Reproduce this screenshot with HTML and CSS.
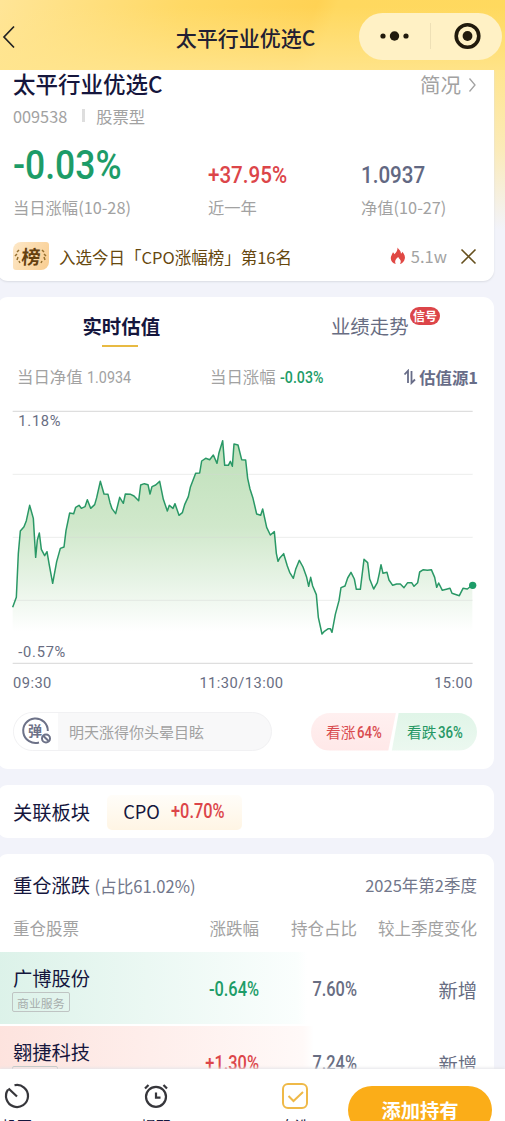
FILE: index.html
```html
<!DOCTYPE html>
<html lang="zh-CN">
<head>
<meta charset="utf-8">
<meta name="viewport" content="width=device-width, initial-scale=1">
<title>太平行业优选C</title>
<link rel="stylesheet" href="styles.css">
</head>
<body>
<div class="app">
  <header class="navbar">
    <svg class="back" width="14" height="24" viewBox="0 0 14 24"><path d="M12 1.5 2 12l10 10.5"/></svg>
    <h1 class="nav-title">太平行业优选C</h1>
    <div class="capsule">
      <svg width="143" height="47" viewBox="0 0 143 47"><circle cx="24" cy="23" r="2.600"/><circle cx="35.500" cy="23" r="4.700"/><circle cx="47" cy="23" r="2.600"/><path class="capsule-line" d="M71.500 10v26"/><circle class="ring" cx="108.500" cy="23" r="11.300"/><circle cx="108.500" cy="23" r="4.900"/></svg>
    </div>
  </header>

  <main class="content">
    <section class="card summary">
      <div class="fund-head">
        <h2 class="fund-name">太平行业优选C</h2>
        <a class="profile">简况<svg width="9" height="16" viewBox="0 0 9 16"><path d="m1.500 1.500 5.500 6.500-5.500 6.500"/></svg></a>
      </div>
      <div class="fund-meta"><span>009538</span><i class="divider"></i><span>股票型</span></div>
      <div class="metrics">
        <div class="metric"><div class="value big green"><span class="din">-0.03%</span></div><div class="label">当日涨幅(10-28)</div></div>
        <div class="metric"><div class="value red"><span class="din">+37.95%</span></div><div class="label">近一年</div></div>
        <div class="metric"><div class="value slate"><span class="din">1.0937</span></div><div class="label">净值(10-27)</div></div>
      </div>
      <div class="rank">
        <span class="rank-badge"><svg class="laurel" width="36" height="28" viewBox="0 0 36 28"><path d="M6 8l-2 2M4 12l-2 2M5 15l-1 3M6 19l1 2M29 8l2 2M31 12l2 2M31 15l1 3M29 19l-1 2"/></svg><b>榜</b></span>
        <span class="rank-text">入选今日「CPO涨幅榜」第16名</span>
        <svg class="flame" width="16" height="18" viewBox="0 0 16 18"><path d="M7.500.5C8.800 2.500 11 4 11 6.700c.8-.5 1.200-1.200 1.400-2 1.800 2.200 2.800 4.300 2.500 6.500-.4 3.500-3 5.500-5 5.700 1.200-1.500 1.100-3.500-.1-4.700-.7-.7-1.300-1.300-1.500-2.300-2.700 1.800-4 4.600-2.600 7C2.800 16.300.8 14 .8 11.200c0-2.300 1.500-3.900 2.200-5.900.8.500 1.100 1.200 1.200 2C6.400 5.500 7.700 3.500 7.500.5z"/></svg>
        <span class="heat">5.1w</span>
        <svg class="close" width="17" height="17" viewBox="0 0 17 17"><path d="m1.500 1.500 14 14m0-14-14 14"/></svg>
      </div>
    </section>

    <section class="card estimate">
      <div class="tabs">
        <div class="tab active">实时估值</div>
        <div class="tab">业绩走势<span class="signal">信号</span></div>
      </div>
      <div class="quote">
        <span>当日净值 <span class="din">1.0934</span></span>
        <span>当日涨幅 <span class="din green strong">-0.03%</span></span>
        <span class="source"><svg width="14" height="16" viewBox="0 0 14 16"><path d="M1.500 5.500 5 1.800V14M8.500 2V14l3.500-3.500"/></svg>估值源1</span>
      </div>
      <div class="chart">
        <svg width="494" height="270" viewBox="0 0 1482 810">
          <defs><linearGradient id="area" gradientUnits="userSpaceOnUse" x1="0" y1="120" x2="0" y2="695"><stop offset="0" stop-color="#bfe0ba"/><stop offset=".45" stop-color="#d0e8cb"/><stop offset=".75" stop-color="#e8f4e7"/><stop offset="1" stop-color="#fff"/></linearGradient></defs>
          <path fill="url(#area)" d="M38 622 49 592 55 460 61 393 72 380 79 362 89 316 100 355 107 472 112 420 118 399 124 448 134 467 141 455 147 490 158 550 170 485 181 445 192 441 198 392 209 339 221 341 227 322 237 316 244 325 255 320 262 299 272 325 284 314 290 293 301 244 312 282 324 283 330 308 336 326 347 341 359 292 370 310 376 282 392 283 402 288 416 302 422 255 433 251 444 254 450 282 456 260 467 255 479 244 490 298 502 333 508 316 519 325 525 311 537 346 547 338 554 314 565 290 571 262 587 220 599 219 605 183 617 175 629 179 640 165 651 190 657 158 668 122 674 196 685 196 691 184 697 199 702 132 714 135 725 179 737 180 743 235 750 267 759 295 770 342 782 346 788 327 800 382 811 405 823 395 829 460 834 484 840 473 851 461 862 498 869 517 880 535 887 508 898 481 909 501 920 532 926 559 932 532 938 558 949 584 955 652 966 702 972 695 985 686 991 686 996 697 1006 643 1017 602 1023 563 1035 558 1043 534 1053 517 1063 537 1069 568 1081 568 1092 478 1103 488 1109 537 1121 567 1132 548 1138 520 1143 494 1149 520 1161 517 1167 540 1178 556 1190 552 1201 552 1212 563 1223 548 1235 548 1242 559 1253 548 1259 516 1270 509 1282 511 1294 509 1304 532 1310 562 1316 549 1327 571 1339 568 1350 565 1356 580 1378 587 1389 565 1402 567 1417 555V695H38Z"/>
          <g class="grid"><path class="outer" d="M38 34H1418M38 790H1418"/><path d="M38 223H1418M38 412H1418M38 601H1418"/></g>
          <polyline class="line" points="38,622 49,592 55,460 61,393 72,380 79,362 89,316 100,355 107,472 112,420 118,399 124,448 134,467 141,455 147,490 158,550 170,485 181,445 192,441 198,392 209,339 221,341 227,322 237,316 244,325 255,320 262,299 272,325 284,314 290,293 301,244 312,282 324,283 330,308 336,326 347,341 359,292 370,310 376,282 392,283 402,288 416,302 422,255 433,251 444,254 450,282 456,260 467,255 479,244 490,298 502,333 508,316 519,325 525,311 537,346 547,338 554,314 565,290 571,262 587,220 599,219 605,183 617,175 629,179 640,165 651,190 657,158 668,122 674,196 685,196 691,184 697,199 702,132 714,135 725,179 737,180 743,235 750,267 759,295 770,342 782,346 788,327 800,382 811,405 823,395 829,460 834,484 840,473 851,461 862,498 869,517 880,535 887,508 898,481 909,501 920,532 926,559 932,532 938,558 949,584 955,652 966,702 972,695 985,686 991,686 996,697 1006,643 1017,602 1023,563 1035,558 1043,534 1053,517 1063,537 1069,568 1081,568 1092,478 1103,488 1109,537 1121,567 1132,548 1138,520 1143,494 1149,520 1161,517 1167,540 1178,556 1190,552 1201,552 1212,563 1223,548 1235,548 1242,559 1253,548 1259,516 1270,509 1282,511 1294,509 1304,532 1310,562 1316,549 1327,571 1339,568 1350,565 1356,580 1378,587 1389,565 1402,567 1417,555"/>
          <circle cx="1418" cy="556" r="11" fill="#1d9c68"/>
          <text x="55" y="78">1.18%</text><text x="55" y="772">-0.57%</text>
        </svg>
      </div>
      <div class="times"><span>09:30</span><span>11:30/13:00</span><span>15:00</span></div>
      <div class="social">
        <div class="danmu">
          <span class="danmu-icon"><svg width="32" height="32" viewBox="0 0 32 32"><path d="M19 27.500A12.300 12.300 0 1 1 27.800 16"/><circle cx="26" cy="23.500" r="4"/><path d="m23.200 20.700 5.600 5.600"/></svg><b>弹</b></span>
          <span class="danmu-text">明天涨得你头晕目眩</span>
        </div>
        <div class="votes"><div class="vote up">看涨<span class="din">64%</span></div><div class="vote down">看跌<span class="din">36%</span></div></div>
      </div>
    </section>

    <section class="card sector">
      <h3>关联板块</h3>
      <div class="sector-chip"><span>CPO</span><span class="din red">+0.70%</span></div>
    </section>

    <section class="card holdings">
      <div class="hold-head"><h3>重仓涨跌 <small>(占比61.02%)</small></h3><span class="season">2025年第2季度</span></div>
      <div class="cols thead"><span>重仓股票</span><span>涨跌幅</span><span>持仓占比</span><span>较上季度变化</span></div>
      <div class="cols stock fall"><div class="stock-name">广博股份<em>商业服务</em></div><span class="din green">-0.64%</span><span class="din">7.60%</span><span>新增</span></div>
      <div class="cols stock rise"><div class="stock-name">翱捷科技<em>半导体</em></div><span class="din red">+1.30%</span><span class="din">7.24%</span><span>新增</span></div>
    </section>
  </main>

  <footer class="toolbar">
    <div class="tool"><svg width="28" height="28" viewBox="0 0 28 28"><path d="M11.500 3.300A11 11 0 1 1 5 7.700M5.500 6.500l8.500 8"/></svg><span>投票</span></div>
    <div class="tool"><svg width="28" height="28" viewBox="0 0 28 28"><circle cx="14" cy="14.800" r="10"/><path d="M14 10.500v5.200h4.500M3 6.500 6.500 3M25 6.500 21.500 3"/></svg><span>提醒</span></div>
    <div class="tool selected"><svg width="28" height="28" viewBox="0 0 28 28"><rect x="2" y="2" width="24" height="24" rx="5"/><path d="m7.500 14 5 5L22 10"/></svg><span>自选</span></div>
    <button class="add">添加持有</button>
  </footer>
</div>
</body>
</html>
```

FILE: styles.css
```css
* { box-sizing: border-box; }
body { margin: 0; font-family: "Noto Sans CJK SC", sans-serif; color: #15163d; }
h1, h2, h3 { margin: 0; font-weight: 500; }
svg { display: block; flex: none; fill: none; }
b, em, i { font-style: normal; }

.app { height: 1121px; overflow: hidden; display: flex; flex-direction: column; background: #f2f3fa; }
.navbar {
  flex: none; height: 70px; padding: 3px 3px 0 2px;
  display: grid; grid-template-columns: 130px 1fr 143px; align-items: center;
  background: linear-gradient(180deg, rgba(255,229,143,0) 10%, rgba(255,229,143,.85)), linear-gradient(110deg, #ffe597 0%, #ffd965 35%, #ffd254 60%, #ffd85f 64%, #ffd95e 100%);
}
.back path { stroke: #222; stroke-width: 1.7; }
.nav-title { text-align: center; font-size: 21px; line-height: 30px; color: #222033; white-space: nowrap; }
.capsule { border-radius: 24px; background: #fff1c5; }
.capsule circle { fill: #211a0c; }
.capsule .ring { fill: none; stroke: #211a0c; stroke-width: 3.6; }
.capsule-line { stroke: #eee0b6; }

.content { flex: 1; min-height: 0; overflow: hidden; padding-right: 11px; background: linear-gradient(#ffe58f 0, #fbebb9 80px, #f2f3fa 160px); }
.card { margin: 0 0 16px -3px; padding-left: 16px; padding-right: 17px; border-radius: 11px; background: #fff; }
.green { color: #1d9c68; }
.red { color: #dc4549; }
.slate { color: #626882; }
.din { display: inline-block; font-family: Roboto, sans-serif; font-weight: 500; transform: scaleX(.84); transform-origin: left center; white-space: nowrap; }

.summary { height: 211px; border-radius: 0 0 11px 11px; box-shadow: 0 1px 2px #dadce3; }
.fund-head { height: 29px; display: flex; justify-content: space-between; align-items: center; }
.fund-name { font-size: 22.5px; line-height: 27px; padding-bottom: 2px; }
.profile { display: flex; align-items: center; gap: 7px; font-size: 20.5px; line-height: 29px; color: #a2a2a2; }
.profile path { stroke: #a2a2a2; stroke-width: 1.3; }
.fund-meta { display: flex; align-items: center; height: 33px; font-size: 16.3px; color: #a2a2a2; }
.divider { width: 3px; height: 13px; margin: 0 11px 0 15px; background: #dedede; }
.metrics { display: grid; grid-template-columns: 195px 153px 1fr; }
.value { height: 63px; padding-top: 24px; font-size: 24.5px; line-height: 34px; }
.value.big { padding-top: 7px; font-size: 41.5px; line-height: 44px; }
.value.big .din { transform: scaleX(.855); }
.label { height: 26px; font-size: 16.3px; line-height: 26px; color: #a2a2a2; margin-top: -1px; }
.rank { height: 50px; margin-top: 11px; display: flex; align-items: center; }
.rank-badge { position: relative; width: 36px; height: 28px; border-radius: 8px 3px 8px 3px; background: linear-gradient(115deg, #fde8c8, #f9cd90); text-align: center; color: #65400f; }
.rank-badge b { font-size: 19px; line-height: 27px; font-weight: 700; display: block; transform: skewX(-4deg); }
.laurel { position: absolute; inset: 0; }
.laurel path { stroke: #96702f; stroke-width: 1.5; }
.rank-text { flex: 1; margin-left: 10px; padding-top: 1px; font-size: 16.5px; color: #66480e; white-space: nowrap; }
.flame path { fill: #e04844; }
.heat { margin: 0 13px 0 5px; font-size: 16.5px; color: #a2a2a2; }
.close path { stroke: #66501e; stroke-width: 1.6; }

.estimate { height: 472px; padding: 0; }
.tabs { height: 58px; display: grid; grid-template-columns: 1fr 1fr; }
.tab { position: relative; justify-self: center; padding-top: 14px; font-size: 19.4px; line-height: 30px; color: #686d82; }
.active { font-weight: 600; color: #15163d; }
.active::after { content: ""; position: absolute; left: 20px; top: 48px; width: 36px; height: 2px; background: #e8ba43; }
.signal { position: absolute; left: 79px; top: 10px; width: 30px; height: 18px; border-radius: 9px; background: #dc4549; color: #fff; font-size: 12px; line-height: 18px; text-align: center; font-weight: 600; }
.quote { height: 45px; padding: 0 16px 2px 20px; display: grid; grid-template-columns: 193px 1fr auto; align-items: center; font-size: 16.4px; line-height: 43px; color: #a2a2a2; white-space: nowrap; }
.quote .din { margin-left: 1px; font-weight: 400; font-size: 16.5px; transform: scaleX(.87); }
.quote .strong { font-weight: 500; transform: scaleX(.86); }
.source { display: flex; align-items: center; gap: 2px; font-weight: 600; color: #686d88; }
.source path { stroke: #686d88; stroke-width: 1.8; }
.chart { height: 270px; margin-left: 3px; }
.chart .grid path { stroke: #d3d8d4; stroke-opacity: .45; stroke-width: 3; }
.chart .grid .outer { stroke: #dedede; stroke-opacity: 1; stroke-width: 4; }
.chart .line { stroke: #2a9866; stroke-width: 4.5; stroke-linejoin: round; }
.chart text { fill: #686d82; font: 44px Roboto, sans-serif; letter-spacing: 2.2px; }
.times { height: 42px; padding: 4px 21px 0 16px; display: flex; justify-content: space-between; font: 14.7px/19px Roboto, sans-serif; letter-spacing: .45px; color: #686d82; }
.times span:nth-child(2) { margin-right: 3px; }
.social { padding: 0 17px 0 16px; display: flex; justify-content: space-between; align-items: center; }
.danmu { width: 259px; height: 39px; display: flex; align-items: center; border: 1px solid #f1f1f3; border-radius: 20px; background: #f8f8f9; overflow: hidden; font-size: 15px; color: #a2a2a2; }
.danmu-icon { position: relative; width: 44px; height: 39px; flex: none; background: #fff; color: #6d7288; }
.danmu-icon svg { margin: 3px 0 0 6px; }
.danmu-icon path, .danmu-icon circle { stroke: #6d7288; stroke-width: 2; }
.danmu-icon b { position: absolute; left: 14px; top: 9px; font-size: 14px; line-height: 18px; font-weight: 700; }
.danmu-text { margin-left: 11px; }
.votes { display: flex; width: 166px; height: 38px; border-radius: 19px; overflow: hidden; font-size: 14.7px; line-height: 38px; }
.vote { height: 38px; white-space: nowrap; }
.vote .din { margin-left: 2px; font-size: 17px; line-height: 20px; transform: scaleX(.78); }
.up { width: 85px; padding-left: 15px; color: #d94b4f; background: linear-gradient(#fff0f0, #ffe8e8); clip-path: polygon(0 0, 100% 0, 91% 100%, 0 100%); }
.down { width: 86px; margin-left: -5px; padding-left: 16px; color: #269865; background: linear-gradient(#e0f5e8, #ecf8f0); clip-path: polygon(9% 0, 100% 0, 100% 100%, 1% 100%); }

.sector { height: 53px; display: flex; align-items: center; gap: 17px; }
h3 { font-size: 19.3px; line-height: 28px; font-weight: 400; white-space: nowrap; }
.sector-chip { width: 135px; height: 35px; margin-top: 1px; padding: 0 0 2px 16px; display: flex; align-items: center; gap: 11px; border-radius: 5px; font-size: 18.3px; background: linear-gradient(#fffdf9, #fff5e4); }
.sector-chip .din { font-size: 19.5px; transform: scaleX(.84); }

.holdings { height: 280px; padding: 0; }
.hold-head { height: 61px; padding: 1px 17px 0 16px; display: flex; align-items: center; justify-content: space-between; }
.hold-head small { font-size: 16.6px; color: #72778b; }
.season { font-size: 16.5px; color: #72778b; }
.cols { padding: 0 17px 0 16px; display: grid; grid-template-columns: 125px 121px 98px 120px; align-items: center; text-align: right; white-space: nowrap; }
.cols > :first-child { text-align: left; }
.thead { height: 37px; padding-bottom: 12px; font-size: 16.5px; color: #a2a2a2; }
.stock { height: 74px; font-size: 19.3px; color: #686d82; border-bottom: 2px solid #fff; }
.stock .din { font-size: 19.5px; transform: scaleX(.84); transform-origin: right center; padding-top: 3px; }
.stock > :last-child { padding-top: 3px; }
.fall { background: linear-gradient(90deg, #dcf2e9, #fafefd 300px, #fff 310px); }
.rise { background: linear-gradient(90deg, #fde3de, #fff9f8 306px, #fff 317px); }
.stock-name { color: #15163d; line-height: 26px; }
.stock-name em { display: block; width: max-content; height: 20px; margin: 1px 0 0 -1px; padding: 0 4px; border: 1px solid #bfc4c3; border-radius: 2px; font-size: 11.9px; line-height: 20px; color: #a7adac; }

.toolbar { position: relative; flex: none; height: 52px; display: grid; grid-template-columns: 139px 139px 70px 144px; background: #fff; box-shadow: 0 -1px 3px #e4e4e8; }
.tool { width: 34px; padding-top: 13px; font-size: 15px; line-height: 22px; text-align: center; white-space: nowrap; color: #15163d; }
.tool svg { margin: 0 auto 5px; }
.tool path, .tool circle { stroke: #36363b; stroke-width: 2.2; }
.tool.selected path, .tool.selected rect { stroke: #efb948; stroke-width: 2; }
.add { height: 48px; margin-top: 17px; padding: 0; border: 0; border-radius: 24px; background: #fbad18; color: #fff; font: 600 19.3px/48px "Noto Sans CJK SC", sans-serif; }
```
